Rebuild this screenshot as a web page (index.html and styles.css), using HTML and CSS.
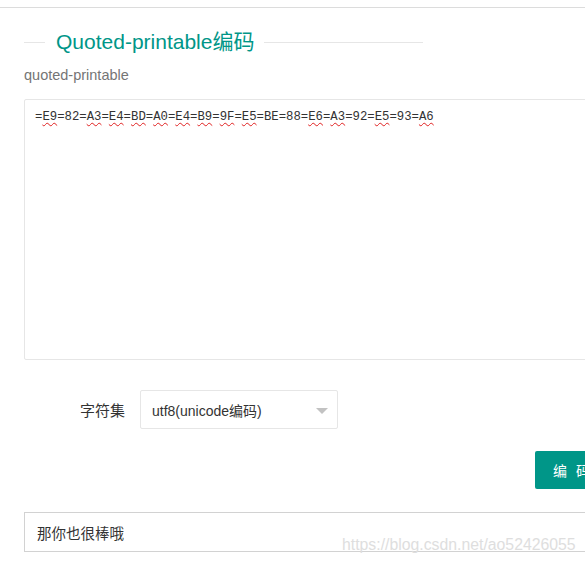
FILE: index.html
```html
<!DOCTYPE html>
<html lang="zh">
<head>
<meta charset="utf-8">
<title>Quoted-printable编码</title>
<link rel="stylesheet" href="styles.css">
</head>
<body>
<div class="topline"></div>
<div class="main">
  <div class="field-title">
    <span class="rule rule-left"></span>
    <h2 class="legend">Quoted-printable编码</h2>
    <span class="rule rule-right"></span>
  </div>
  <p class="sub">quoted-printable</p>
  <div class="textarea">=<span class="sp">E9</span>=82=<span class="sp">A3</span>=<span class="sp">E4</span>=<span class="sp">BD</span>=<span class="sp">A0</span>=<span class="sp">E4</span>=<span class="sp">B9</span>=<span class="sp">9F</span>=<span class="sp">E5</span>=BE=88=<span class="sp">E6</span>=<span class="sp">A3</span>=92=<span class="sp">E5</span>=93=<span class="sp">A6</span></div>
  <div class="form-row">
    <label class="form-label">字符集</label>
    <div class="select">
      <span class="select-text">utf8(unicode编码)</span>
      <span class="caret"></span>
    </div>
  </div>
  <div class="btn-row">
    <button class="btn">编 码</button>
  </div>
  <div class="output">那你也很棒哦</div>
</div>
<div class="watermark">https://blog.csdn.net/ao52426055</div>
</body>
</html>
```
FILE: styles.css
```css
html, body {
  margin: 0;
  padding: 0;
  overflow: hidden;
  background: #fff;
}
body {
  position: relative;
  padding-top: 7px;
  font-family: "Liberation Sans", Arial, "Noto Sans CJK SC", sans-serif;
  font-size: 14px;
  color: #333;
  width: 585px;
  height: 562px;
  box-sizing: border-box;
}
.topline {
  border-top: 1px solid #dcdcdc;
}
.main {
  margin-left: 24px;
  width: 584px;
}
.field-title {
  display: flex;
  align-items: center;
  width: 399px;
  height: 30px;
  margin-top: 19px;
}
.rule {
  height: 1px;
  background: #e6e6e6;
}
.rule-left {
  width: 21px;
}
.rule-right {
  flex: 1;
}
.legend {
  margin: 0 10px 0 11px;
  font-size: 21px;
  font-weight: normal;
  line-height: 30px;
  color: #009688;
  white-space: nowrap;
}
.sub {
  margin: 8px 0 0;
  line-height: 20px;
  font-size: 14.5px;
  color: #757575;
}
.textarea {
  margin-top: 14px;
  height: 261px;
  box-sizing: border-box;
  border: 1px solid #e6e6e6;
  border-radius: 2px;
  padding: 7px 10px;
  font-family: "Liberation Mono", "DejaVu Sans Mono", monospace;
  font-size: 12.3px;
  line-height: 20px;
  color: #333;
  white-space: nowrap;
}
.sp {
  text-decoration: underline wavy #e02020;
  text-decoration-thickness: 1px;
  text-decoration-skip-ink: none;
  text-underline-offset: 2px;
}
.form-row {
  display: flex;
  align-items: center;
  margin-top: 30px;
}
.form-label {
  width: 116px;
  box-sizing: border-box;
  padding-right: 15px;
  text-align: right;
  font-size: 15px;
  color: #333;
}
.select {
  width: 198px;
  height: 39px;
  box-sizing: border-box;
  border: 1px solid #e6e6e6;
  border-radius: 2px;
  display: flex;
  align-items: center;
  justify-content: space-between;
  padding: 0 9px 0 11px;
  color: #333;
}
.caret {
  width: 0;
  height: 0;
  border-style: solid;
  border-width: 6px 6px 0 6px;
  border-color: #c2c2c2 transparent transparent transparent;
  margin-top: 2px;
}
.btn-row {
  display: flex;
  justify-content: flex-end;
  margin-top: 22px;
}
.btn {
  height: 38px;
  padding: 0 18px;
  border: none;
  border-radius: 2px;
  background: #009688;
  color: #fff;
  font-family: "Liberation Sans", Arial, "Noto Sans CJK SC", sans-serif;
  font-size: 14px;
  word-spacing: 5px;
  white-space: nowrap;
}
.output {
  margin-top: 23px;
  height: 40px;
  box-sizing: border-box;
  border: 1px solid #d2d2d2;
  padding: 0 12px;
  display: flex;
  align-items: center;
  font-size: 14.5px;
  color: #333;
}
.watermark {
  position: absolute;
  left: 342px;
  top: 537px;
  font-size: 15.8px;
  line-height: 16px;
  color: #dedede;
  white-space: nowrap;
}
```
